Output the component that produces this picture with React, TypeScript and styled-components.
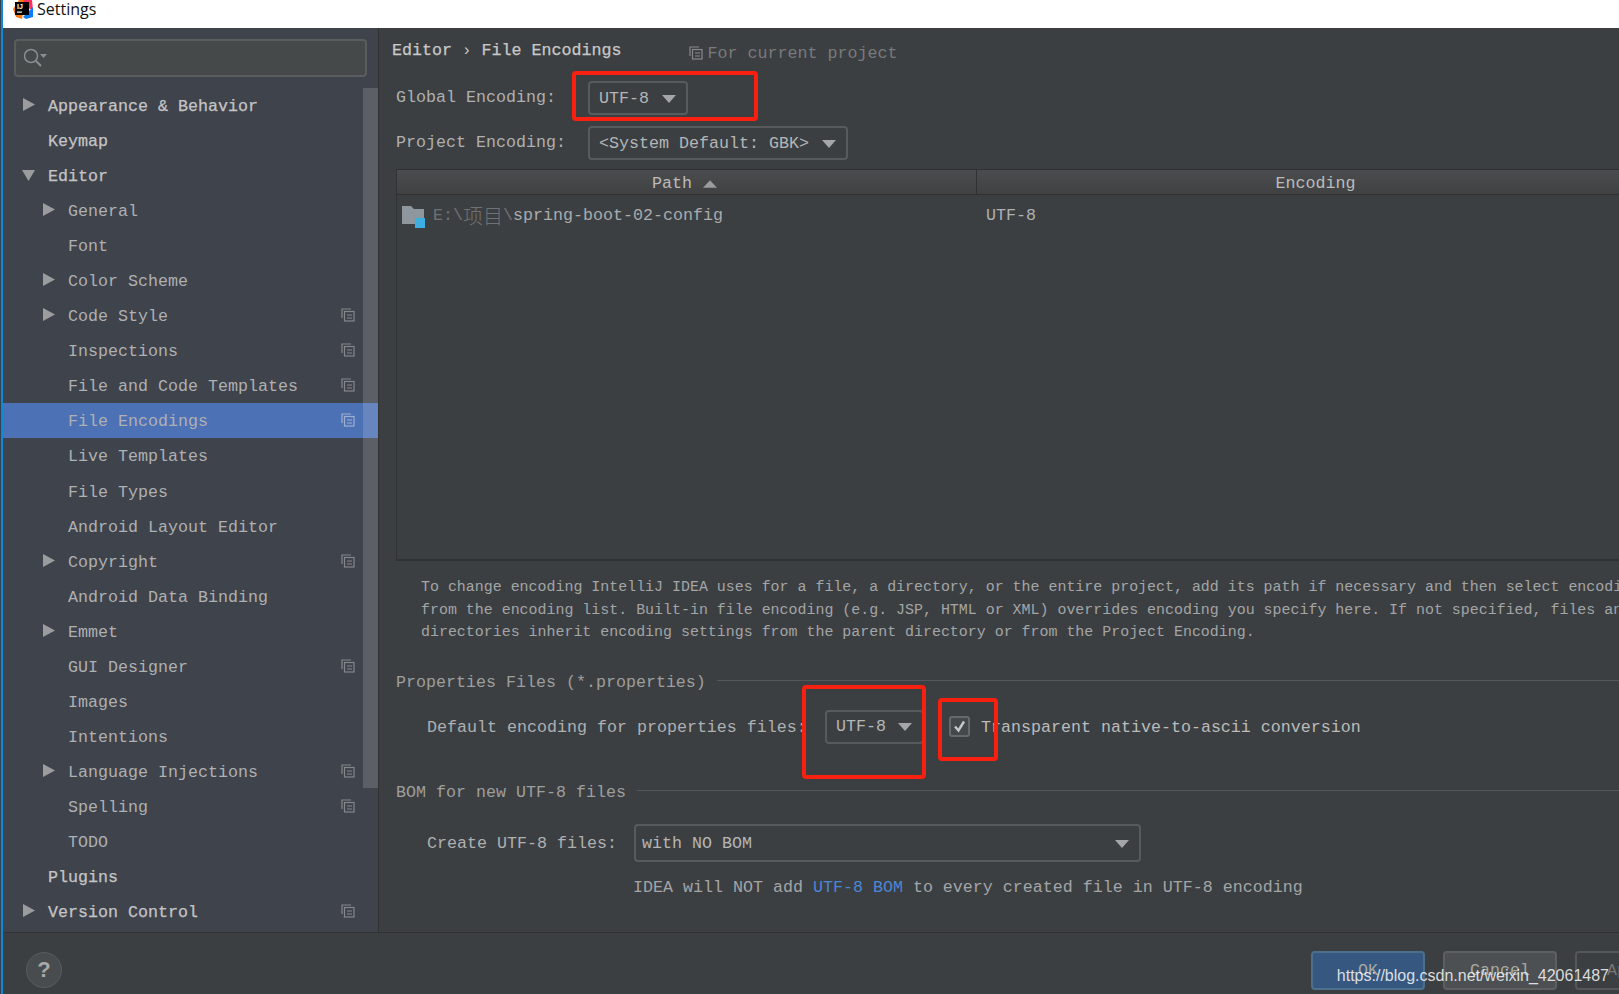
import styled, { createGlobalStyle } from 'styled-components';

const MONO = `'Liberation Mono', 'Noto Sans CJK SC', monospace`;

const GlobalStyle = createGlobalStyle`
  html, body {
    margin: 0;
    padding: 0;
    background: #3c3f41;
  }
  * {
    box-sizing: border-box;
  }
`;

const Page = styled.div`
  position: relative;
  width: 1619px;
  height: 994px;
  overflow: hidden;
  display: flex;
  flex-direction: column;
  padding-left: 3px;
  background: linear-gradient(90deg, #33424f 1px, #0f86d6 1px);
  font-family: ${MONO};
  font-size: 16.67px;
  color: #bbbbbb;
`;

const TitleBar = styled.div`
  height: 28px;
  flex: none;
  background: #fff;
  display: flex;
  align-items: flex-start;
  gap: 4px;
  padding-left: 10px;
  overflow: hidden;
  font-family: 'Open Sans', 'Noto Sans', sans-serif;
  font-size: 16px;
  line-height: 19px;
  color: #111;
`;

const Body = styled.div`
  flex: 1;
  min-height: 0;
  display: flex;
`;

const Sidebar = styled.aside`
  position: relative;
  width: 376px;
  flex: none;
  background: #3f434c;
  border-right: 1px solid #323232;
  padding: 11px 0 0 0;
`;

const SearchBox = styled.div`
  margin: 0 11px;
  width: 353px;
  height: 38px;
  background: #45494a;
  border: 2px solid #5a5d5e;
  border-radius: 4px;
  display: flex;
  align-items: center;
  padding-left: 6px;
`;

const Tree = styled.div`
  margin-top: 11px;
`;

const TreeRow = styled.div<{ $level: number; $selected?: boolean }>`
  position: relative;
  height: 35.05px;
  display: flex;
  align-items: center;
  padding-left: ${(p) => (p.$level === 0 ? 45 : 65)}px;
  padding-top: 2px;
  white-space: pre;
  background: ${(p) => (p.$selected ? '#4d71b5' : 'transparent')};
  color: ${(p) => (p.$level === 0 ? '#c4c4c4' : '#aeb0b2')};
  -webkit-text-stroke: ${(p) => (p.$level === 0 ? '0.25px' : '0')};
`;

const ArrowSlot = styled.span<{ $level: number }>`
  position: absolute;
  left: ${(p) => (p.$level === 0 ? 19 : 39)}px;
  top: 10px;
  display: flex;
`;

const ProjectIcon = styled.span`
  position: absolute;
  left: 338px;
  top: 10px;
  display: flex;
`;

const ScrollThumb = styled.div`
  position: absolute;
  top: 60px;
  right: 0;
  width: 15px;
  height: 700px;
  background: rgba(255, 255, 255, 0.15);
`;

const Main = styled.main`
  flex: 1;
  min-width: 0;
  overflow: hidden;
  padding: 8px 0 0 17px;
  background: #3c3f41;
`;

const Breadcrumb = styled.div`
  height: 28px;
  margin-left: -4px;
  display: flex;
  align-items: center;
  white-space: pre;
`;

const Crumb = styled.span`
  color: #c8c8c8;
  -webkit-text-stroke: 0.25px;
`;

const CrumbSep = styled.span`
  margin: 0 12px 0 12px;
  font-family: 'Liberation Sans', sans-serif;
  color: #c8c8c8;
`;

const ProjectNote = styled.span`
  display: flex;
  align-items: center;
  gap: 4px;
  margin: 6px 0 0 68px;
  color: #787a7c;
`;

const FormRow = styled.div<{ $top: number; $indent?: number }>`
  display: flex;
  align-items: center;
  margin-top: ${(p) => p.$top}px;
  padding-left: ${(p) => p.$indent ?? 0}px;
  white-space: pre;
`;

const Label = styled.label<{ $width: number; $low?: boolean }>`
  width: ${(p) => p.$width}px;
  flex: none;
  margin-top: ${(p) => (p.$low ? 1 : -2)}px;
  color: #aeb0b2;
`;

const Combo = styled.div<{ $pad: number; $gap?: number; $width?: number; $height?: number }>`
  display: flex;
  align-items: center;
  justify-content: space-between;
  gap: ${(p) => p.$gap ?? 13}px;
  width: ${(p) => (p.$width ? `${p.$width}px` : 'auto')};
  height: ${(p) => p.$height ?? 34}px;
  padding: ${(p) => (p.$width ? 2 : 0)}px ${(p) => (p.$width ? 10 : p.$pad + 1)}px 0 ${(p) => p.$pad}px;
  background: #3c3f41;
  border: 2px solid #585b5d;
  border-radius: 4px;
  color: #b4b6b8;
`;

const Table = styled.div`
  margin-top: 9px;
  height: 392px;
  width: 1400px;
  border: 1px solid #2f3133;
  border-width: 1px 0 2px 1px;
`;

const TableHead = styled.div`
  display: grid;
  grid-template-columns: 579px 676px;
  height: 25px;
  background: linear-gradient(#4a4c4e, #3f4143);
  border-bottom: 1px solid #2f3133;
`;

const HeadCell = styled.div`
  display: flex;
  align-items: center;
  justify-content: center;
  gap: 11px;
  padding-top: 3px;
  &:first-child {
    padding-right: 4px;
  }
  & + & {
    border-left: 1px solid #2f3133;
    padding-left: 2px;
  }
`;

const TableRow = styled.div`
  display: grid;
  grid-template-columns: 579px 676px;
  height: 32px;
  margin-top: 5px;
  align-items: center;
  line-height: 20px;
`;

const PathCell = styled.div`
  display: flex;
  align-items: center;
  gap: 7px;
  padding-left: 5px;
  white-space: pre;
  color: #a9abad;
`;

const DimPath = styled.span`
  color: #6f7274;
`;

const Cjk = styled.span`
  display: inline-block;
  height: 20px;
  line-height: 20px;
  vertical-align: top;
  font-size: 20px;
  font-family: 'Noto Sans CJK SC', sans-serif;
  font-weight: 300;
`;

const EncodingCell = styled.div`
  padding-left: 10px;
  color: #aeb0b2;
`;

const HelpText = styled.div`
  margin: 15px 0 0 25px;
  font-size: 14.95px;
  line-height: 22.5px;
  white-space: pre;
  color: #a3a5a7;
`;

const GroupTitle = styled.div<{ $top: number }>`
  display: flex;
  align-items: center;
  gap: 11px;
  height: 20px;
  padding-top: 4px;
  margin-top: ${(p) => p.$top}px;
  white-space: pre;
  color: #9c9e9f;
  &::after {
    content: '';
    flex: 1;
    height: 1px;
    margin-top: -4px;
    background: #555759;
  }
`;

const CheckBox = styled.span`
  width: 21px;
  height: 21px;
  flex: none;
  margin: 0 11px 0 25px;
  display: flex;
  align-items: center;
  justify-content: center;
  background: #44484a;
  border: 2px solid #66696b;
  border-radius: 3px;
`;

const CheckLabel = styled.span`
  margin-top: 2px;
`;

const Note = styled.div`
  margin: 16px 0 0 237px;
  height: 20px;
  white-space: pre;
  color: #a3a5a7;
`;

const Link = styled.span`
  color: #4b86d4;
`;

const Footer = styled.footer`
  height: 62px;
  flex: none;
  border-top: 1px solid #323232;
  background: #3c3f41;
  padding: 18px 0 0 23px;
  display: flex;
  align-items: flex-start;
`;

const HelpButton = styled.div`
  width: 36px;
  height: 36px;
  margin-top: 1px;
  flex: none;
  border-radius: 50%;
  background: #494c4e;
  border: 1px solid #5a5d5f;
  display: flex;
  align-items: center;
  justify-content: center;
  font-family: 'Liberation Sans', sans-serif;
  font-size: 22px;
  font-weight: 700;
  color: #a8a8a8;
`;

const Buttons = styled.div`
  display: flex;
  gap: 18px;
  margin-left: 1249px;
  flex: none;
`;

const DialogButton = styled.div<{ $kind: 'primary' | 'normal' | 'disabled' }>`
  width: 114px;
  height: 39px;
  flex: none;
  display: flex;
  align-items: center;
  justify-content: center;
  border-radius: 4px;
  border: 2px solid
    ${(p) => (p.$kind === 'primary' ? '#4c708c' : p.$kind === 'normal' ? '#5e6060' : '#555759')};
  background: ${(p) =>
    p.$kind === 'primary' ? '#365880' : p.$kind === 'normal' ? '#4c5052' : '#3c3f41'};
  color: ${(p) => (p.$kind === 'disabled' ? '#777' : '#a8a8a0')};
`;

const Highlight = styled.div<{ $x: number; $y: number; $w: number; $h: number }>`
  position: absolute;
  left: ${(p) => p.$x}px;
  top: ${(p) => p.$y}px;
  width: ${(p) => p.$w}px;
  height: ${(p) => p.$h}px;
  border: 4px solid #f9200f;
  border-radius: 4px;
`;

const Watermark = styled.div`
  position: absolute;
  right: 10px;
  bottom: 8px;
  font-family: 'Liberation Sans', sans-serif;
  font-size: 16px;
  line-height: 20px;
  color: rgba(255, 255, 255, 0.82);
`;

const Triangle = ({ dir, size = 13, color = '#9a9c9e' }: { dir: 'right' | 'down' | 'up'; size?: number; color?: string }) => {
  const pts = dir === 'right' ? '1,0 13,6.5 1,13' : dir === 'down' ? '0,2 13,2 6.5,13' : '0,10 13,10 6.5,3';
  return (
    <svg width={size} height={size} viewBox="0 0 13 13">
      <polygon points={pts} fill={color} />
    </svg>
  );
};

const ComboArrow = () => (
  <svg width="14" height="9" viewBox="0 0 14 9" style={{ flex: 'none' }}>
    <polygon points="0,1 14,1 7,9" fill="#a4a6a8" />
  </svg>
);

const CopyIcon = ({ color = '#85888b' }: { color?: string }) => (
  <svg width="14" height="14" viewBox="0 0 14 14" fill="none" stroke={color} strokeWidth="1.2">
    <path d="M1 10V1h9" />
    <rect x="3.5" y="3.5" width="9.5" height="9.5" />
    <path d="M6 7h5M6 10h5" />
  </svg>
);

const IdeaLogo = () => (
  <svg width="20" height="20" viewBox="0 0 20 20" style={{ marginTop: -1, flex: 'none' }}>
    <polygon points="0,10 6,1 12,1 9,20 3,18" fill="#f97a12" />
    <polygon points="10,0 19,1 20,11 12,8" fill="#fe315d" />
    <polygon points="10,18 20,8 20,18 13,20" fill="#087cfa" />
    <rect x="2" y="3" width="14" height="13" fill="#000" />
    <text x="4" y="10" fontSize="7" fontWeight="700" fontFamily="'Liberation Sans', sans-serif" fill="#fff">
      IJ
    </text>
    <rect x="4" y="12.5" width="5" height="1.2" fill="#fff" />
  </svg>
);

const SearchIcon = () => (
  <svg width="26" height="22" viewBox="0 0 26 22" fill="none">
    <circle cx="9" cy="9" r="6.5" stroke="#8b8e90" strokeWidth="1.5" />
    <path d="M14 14l5 5" stroke="#8b8e90" strokeWidth="2" />
    <polygon points="18,7 25,7 21.5,11" fill="#8b8e90" />
  </svg>
);

const FolderIcon = () => (
  <svg width="24" height="23" viewBox="0 0 24 23" style={{ flex: 'none' }}>
    <path d="M0 1h9l3 3h10v15H0z" fill="#8e979e" />
    <rect x="13" y="13" width="10" height="10" fill="#3daee0" />
  </svg>
);

type Item = { label: string; level: number; arrow?: 'right' | 'down'; project?: boolean; selected?: boolean };

const items: Item[] = [
  { label: 'Appearance & Behavior', level: 0, arrow: 'right' },
  { label: 'Keymap', level: 0 },
  { label: 'Editor', level: 0, arrow: 'down' },
  { label: 'General', level: 1, arrow: 'right' },
  { label: 'Font', level: 1 },
  { label: 'Color Scheme', level: 1, arrow: 'right' },
  { label: 'Code Style', level: 1, arrow: 'right', project: true },
  { label: 'Inspections', level: 1, project: true },
  { label: 'File and Code Templates', level: 1, project: true },
  { label: 'File Encodings', level: 1, project: true, selected: true },
  { label: 'Live Templates', level: 1 },
  { label: 'File Types', level: 1 },
  { label: 'Android Layout Editor', level: 1 },
  { label: 'Copyright', level: 1, arrow: 'right', project: true },
  { label: 'Android Data Binding', level: 1 },
  { label: 'Emmet', level: 1, arrow: 'right' },
  { label: 'GUI Designer', level: 1, project: true },
  { label: 'Images', level: 1 },
  { label: 'Intentions', level: 1 },
  { label: 'Language Injections', level: 1, arrow: 'right', project: true },
  { label: 'Spelling', level: 1, project: true },
  { label: 'TODO', level: 1 },
  { label: 'Plugins', level: 0 },
  { label: 'Version Control', level: 0, arrow: 'right', project: true },
];

const App = () => {
  return (
    <Page>
      <GlobalStyle />
      <TitleBar>
        <IdeaLogo />
        <span>Settings</span>
      </TitleBar>
      <Body>
        <Sidebar>
          <SearchBox>
            <SearchIcon />
          </SearchBox>
          <Tree>
            {items.map((item) => (
              <TreeRow key={item.label} $level={item.level} $selected={item.selected}>
                {item.arrow && (
                  <ArrowSlot $level={item.level}>
                    <Triangle dir={item.arrow} />
                  </ArrowSlot>
                )}
                {item.label}
                {item.project && (
                  <ProjectIcon>
                    <CopyIcon color={item.selected ? '#9fb0cf' : '#85888b'} />
                  </ProjectIcon>
                )}
              </TreeRow>
            ))}
          </Tree>
          <ScrollThumb />
        </Sidebar>
        <Main>
          <Breadcrumb>
            <Crumb>Editor</Crumb>
            <CrumbSep>›</CrumbSep>
            <Crumb>File Encodings</Crumb>
            <ProjectNote>
              <CopyIcon />
              For current project
            </ProjectNote>
          </Breadcrumb>
          <FormRow $top={17}>
            <Label $width={192}>Global Encoding:</Label>
            <Combo $pad={9}>
              UTF-8
              <ComboArrow />
            </Combo>
          </FormRow>
          <FormRow $top={11}>
            <Label $width={192}>Project Encoding:</Label>
            <Combo $pad={9}>
              {'<System Default: GBK>'}
              <ComboArrow />
            </Combo>
          </FormRow>
          <Table>
            <TableHead>
              <HeadCell>
                Path
                <Triangle dir="up" size={14} />
              </HeadCell>
              <HeadCell>Encoding</HeadCell>
            </TableHead>
            <TableRow>
              <PathCell>
                <FolderIcon />
                <span>
                  <DimPath>
                    E:\<Cjk>项目</Cjk>\
                  </DimPath>
                  spring-boot-02-config
                </span>
              </PathCell>
              <EncodingCell>UTF-8</EncodingCell>
            </TableRow>
          </Table>
          <HelpText>
            {'To change encoding IntelliJ IDEA uses for a file, a directory, or the entire project, add its path if necessary and then select encoding\n'}
            {'from the encoding list. Built-in file encoding (e.g. JSP, HTML or XML) overrides encoding you specify here. If not specified, files and\n'}
            {'directories inherit encoding settings from the parent directory or from the Project Encoding.'}
          </HelpText>
          <GroupTitle $top={27}>Properties Files (*.properties)</GroupTitle>
          <FormRow $top={19} $indent={31}>
            <Label $width={398} $low>Default encoding for properties files:</Label>
            <Combo $pad={9} $gap={12}>
              UTF-8
              <ComboArrow />
            </Combo>
            <CheckBox>
              <svg width="15" height="15" viewBox="0 0 15 15" fill="none">
                <path d="M3 7.5l3.5 4L12 2.5" stroke="#c4c6c8" strokeWidth="2.4" />
              </svg>
            </CheckBox>
            <CheckLabel>Transparent native-to-ascii conversion</CheckLabel>
          </FormRow>
          <GroupTitle $top={37}>BOM for new UTF-8 files</GroupTitle>
          <FormRow $top={23} $indent={31}>
            <Label $width={207} $low>Create UTF-8 files:</Label>
            <Combo $pad={6} $width={507} $height={38}>
              with NO BOM
              <ComboArrow />
            </Combo>
          </FormRow>
          <Note>
            IDEA will NOT add <Link>UTF-8 BOM</Link> to every created file in UTF-8 encoding
          </Note>
        </Main>
      </Body>
      <Footer>
        <HelpButton>?</HelpButton>
        <Buttons>
          <DialogButton $kind="primary">OK</DialogButton>
          <DialogButton $kind="normal">Cancel</DialogButton>
          <DialogButton $kind="disabled">Apply</DialogButton>
        </Buttons>
      </Footer>
      <Highlight $x={572} $y={71} $w={186} $h={50} />
      <Highlight $x={802} $y={685} $w={124} $h={94} />
      <Highlight $x={938} $y={698} $w={60} $h={63} />
      <Watermark>https://blog.csdn.net/weixin_42061487</Watermark>
    </Page>
  );
};

export default App;
